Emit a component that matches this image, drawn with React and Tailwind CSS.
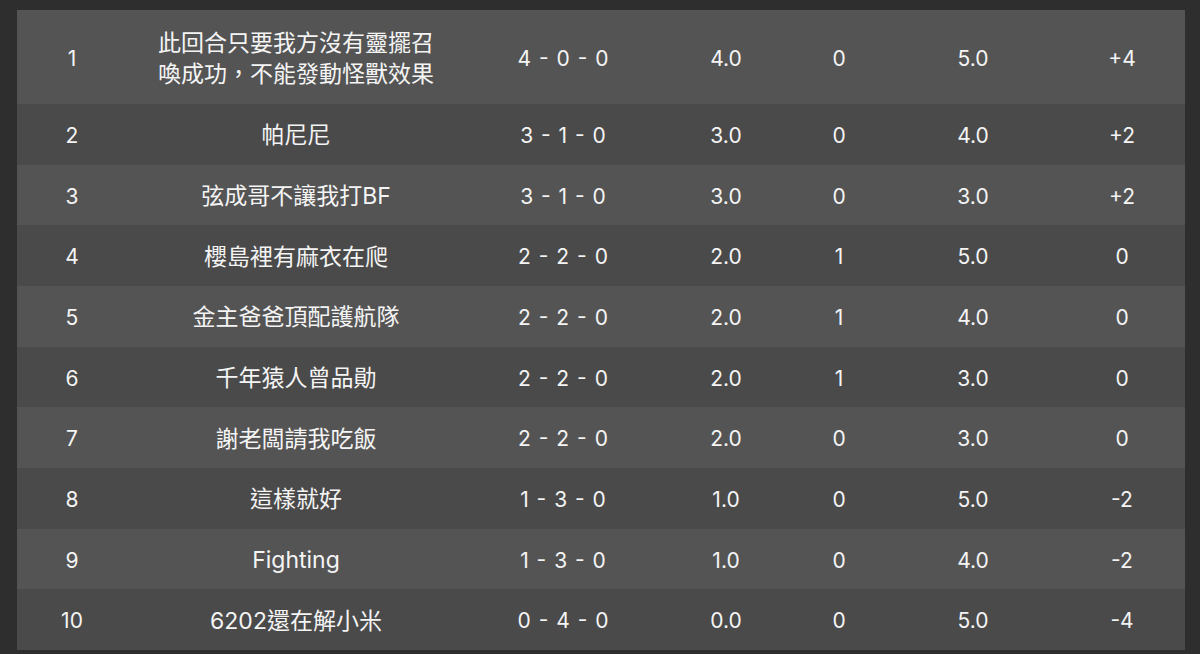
const rows = [
  ["1", "此回合只要我方沒有靈擺召喚成功，不能發動怪獸效果", "4 - 0 - 0", "4.0", "0", "5.0", "+4"],
  ["2", "帕尼尼", "3 - 1 - 0", "3.0", "0", "4.0", "+2"],
  ["3", "弦成哥不讓我打BF", "3 - 1 - 0", "3.0", "0", "3.0", "+2"],
  ["4", "櫻島裡有麻衣在爬", "2 - 2 - 0", "2.0", "1", "5.0", "0"],
  ["5", "金主爸爸頂配護航隊", "2 - 2 - 0", "2.0", "1", "4.0", "0"],
  ["6", "千年猿人曾品勛", "2 - 2 - 0", "2.0", "1", "3.0", "0"],
  ["7", "謝老闆請我吃飯", "2 - 2 - 0", "2.0", "0", "3.0", "0"],
  ["8", "這樣就好", "1 - 3 - 0", "1.0", "0", "5.0", "-2"],
  ["9", "Fighting", "1 - 3 - 0", "1.0", "0", "4.0", "-2"],
  ["10", "6202還在解小米", "0 - 4 - 0", "0.0", "0", "5.0", "-4"],
];

export default function App() {
  return (
    <div className="h-[654px] w-[1200px] bg-[#2e2e2e] pt-[10px] pl-[17px] font-['Inter','Noto_Sans_CJK_TC',sans-serif] text-[#f4f4f4]">
      <div className="grid h-[640px] w-[1168px] grid-rows-[94px_repeat(9,1fr)]">
        {rows.map((r, i) => (
          <div
            key={r[0]}
            className={`grid grid-cols-[110px_338px_196px_130px_96px_172px_126px] items-center pt-[3px] text-center text-[21px] ${
              i % 2 === 0 ? "bg-[#545454]" : "bg-[#4a4a4a]"
            }`}
          >
            <div>{r[0]}</div>
            <div className="mx-auto max-w-[282px] text-[23px] leading-[31px]">{r[1]}</div>
            <div className="[word-spacing:2px]">{r[2]}</div>
            <div>{r[3]}</div>
            <div>{r[4]}</div>
            <div>{r[5]}</div>
            <div>{r[6]}</div>
          </div>
        ))}
      </div>
    </div>
  );
}
